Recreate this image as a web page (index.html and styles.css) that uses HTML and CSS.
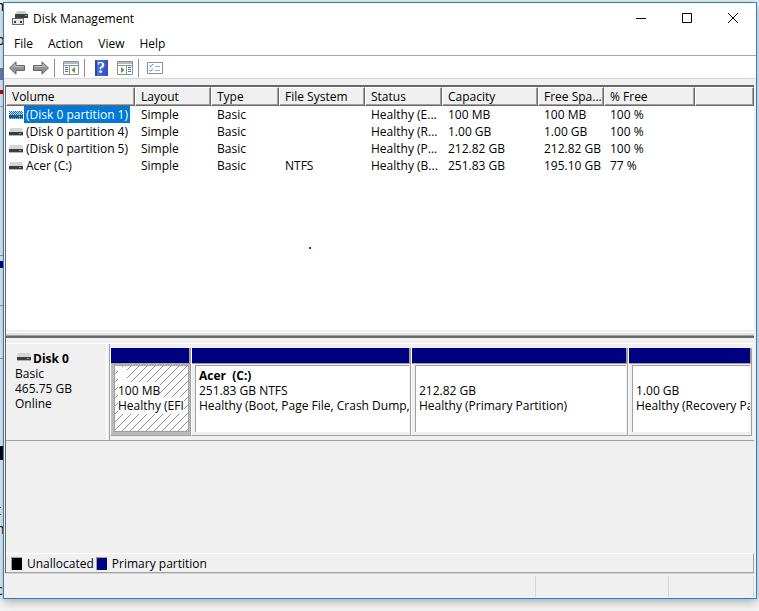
FILE: index.html
```html
<!DOCTYPE html>
<html lang="en">
<head>
    <meta charset="UTF-8">
    <meta name="viewport" content="width=device-width, initial-scale=1.0">
    <title>Disk Management</title>
    <link rel="stylesheet" href="styles.css">
</head>
<body>
    <!-- page showing behind the window -->
    <div class="backdrop" aria-hidden="true">
        <span class="scrap" style="top: -2px">m</span>
        <span class="scrap" style="top: 32px">b</span>
        <span class="scrap" style="top: 502px">t</span>
        <span class="scrap" style="top: 521px">n</span>
        <span class="scrap" style="top: 582px">c</span>
        <i class="mark slate" style="top: 68px; height: 12px"></i>
        <i class="mark red" style="top: 90px; height: 4px"></i>
        <i class="mark line" style="top: 106px; height: 1px"></i>
        <i class="mark line" style="top: 255px; height: 1px"></i>
        <i class="mark navy" style="top: 261px; height: 7px"></i>
        <i class="mark line" style="top: 305px; height: 1px"></i>
        <i class="mark line" style="top: 358px; height: 1px"></i>
        <i class="mark black" style="top: 446px; height: 14px"></i>
    </div>

    <svg class="defs" aria-hidden="true">
        <symbol id="drive" viewBox="0 0 14 8">
            <path d="M1 0h12l1 4H0z" fill="#d4d5d8"/>
            <rect y="4" width="14" height="3" fill="#3a3d42"/>
            <rect y="7" width="14" height="1" fill="#b4b4b4"/>
            <rect x="10" y="5" width="2" height="1" fill="#35e04a"/>
        </symbol>
        <pattern id="dither" width="2" height="2" patternUnits="userSpaceOnUse">
            <path d="M0 0h1v1H0zM1 1h1v1H1z" fill="#0078d7"/>
        </pattern>
    </svg>

    <div class="window">
        <header class="titlebar">
            <svg class="app-icon" viewBox="0 0 16 16" aria-hidden="true">
                <path d="M5 1h8l3 3H3z" fill="#c9cbcd"/>
                <path d="M3 4h13v4H3z" fill="#3b3e41"/>
                <rect x="13" y="5" width="2" height="1" fill="#3ee04c"/>
                <path d="M0 8h12v7H0z" fill="#6a6a6a"/>
                <path d="M1 9h10v5H1z" fill="#e8e8e8"/>
                <path d="M2 11h2v2H2zM8 11h2v2H8z" fill="#333"/>
            </svg>
            <h1>Disk Management</h1>
            <div class="controls">
                <button type="button" aria-label="Minimize">
                    <svg viewBox="0 0 10 10"><path d="M0 5.5h10"/></svg>
                </button>
                <button type="button" aria-label="Maximize">
                    <svg viewBox="0 0 10 10"><path d="M.5.5h9v9h-9z"/></svg>
                </button>
                <button type="button" aria-label="Close">
                    <svg viewBox="0 0 10 10"><path d="M0 0l10 10M10 0L0 10"/></svg>
                </button>
            </div>
        </header>

        <nav class="menubar">
            <button type="button">File</button>
            <button type="button">Action</button>
            <button type="button">View</button>
            <button type="button">Help</button>
        </nav>

        <div class="toolbar">
            <button type="button" aria-label="Back">
                <svg viewBox="0 0 16 14"><path d="M.5 7L7 .8v3.700h8.500v5H7v3.700z" fill="#929292" stroke="#666"/><path d="M2.500 6.800L6 3.500v2h8.500" fill="none" stroke="#c4c4c4"/></svg>
            </button>
            <button type="button" aria-label="Forward">
                <svg viewBox="0 0 16 14"><path d="M15.500 7L9 .8v3.700H.5v5H9v3.700z" fill="#929292" stroke="#666"/><path d="M1.500 5.500H10v-2l3.500 3.300" fill="none" stroke="#c4c4c4"/></svg>
            </button>
            <span class="divider"></span>
            <button type="button" aria-label="Show or hide console tree">
                <svg viewBox="0 0 16 14"><path d="M.5.5h15v13H.5z" fill="#fff" stroke="#8b919b"/><path d="M1 1h14v2H1z" fill="#b4bac4"/><path d="M1 4.500h14M6.500 5v8" stroke="#8b919b"/><path d="M2 6.500h3M2 8.500h3M2 10.500h3" stroke="#3c76b5"/><path d="M12 6v6L8.500 9z" fill="#3fae2a"/></svg>
            </button>
            <span class="divider"></span>
            <button type="button" aria-label="Help">
                <span class="help">?</span>
            </button>
            <button type="button" aria-label="Show or hide action pane">
                <svg viewBox="0 0 16 14"><path d="M.5.5h15v13H.5z" fill="#fff" stroke="#8b919b"/><path d="M1 1h14v2H1z" fill="#b4bac4"/><path d="M1 4.500h14M9.500 5v8" stroke="#8b919b"/><path d="M11 6.500h3M11 8.500h3M11 10.500h3" stroke="#3c76b5"/><path d="M4 6v6l3.500-3z" fill="#3fae2a"/></svg>
            </button>
            <span class="divider"></span>
            <button type="button" aria-label="Properties">
                <svg viewBox="0 0 16 12"><path d="M.5.5h15v11H.5z" fill="#fff" stroke="#8b919b"/><path d="M2.500 3.500l1.200 1.200L6 2M2.500 8l1.200 1.200L6 6.500" fill="none" stroke="#2f8be0"/><path d="M8 4.500h5M8 8.500h5" stroke="#a9adb4"/></svg>
            </button>
        </div>

        <main class="panes">
            <div class="volumes">
                <table>
                    <colgroup>
                        <col class="c-volume"><col class="c-layout"><col class="c-type"><col class="c-fs"><col class="c-status"><col class="c-capacity"><col class="c-space"><col class="c-free"><col>
                    </colgroup>
                    <thead>
                        <tr><th>Volume</th><th>Layout</th><th>Type</th><th>File System</th><th>Status</th><th>Capacity</th><th>Free Spa...</th><th>% Free</th><th></th></tr>
                    </thead>
                    <tbody>
                        <tr class="selected"><td><svg class="drive"><use href="#drive"/><rect width="14" height="8" fill="url(#dither)"/></svg><span>(Disk 0 partition 1)</span></td><td>Simple</td><td>Basic</td><td></td><td>Healthy (E...</td><td>100 MB</td><td>100 MB</td><td>100 %</td><td></td></tr>
                        <tr><td><svg class="drive"><use href="#drive"/></svg><span>(Disk 0 partition 4)</span></td><td>Simple</td><td>Basic</td><td></td><td>Healthy (R...</td><td>1.00 GB</td><td>1.00 GB</td><td>100 %</td><td></td></tr>
                        <tr><td><svg class="drive"><use href="#drive"/></svg><span>(Disk 0 partition 5)</span></td><td>Simple</td><td>Basic</td><td></td><td>Healthy (P...</td><td>212.82 GB</td><td>212.82 GB</td><td>100 %</td><td></td></tr>
                        <tr><td><svg class="drive"><use href="#drive"/></svg><span>Acer (C:)</span></td><td>Simple</td><td>Basic</td><td>NTFS</td><td>Healthy (B...</td><td>251.83 GB</td><td>195.10 GB</td><td>77 %</td><td></td></tr>
                    </tbody>
                </table>
                <i class="speck"></i>
            </div>
            <div class="splitter"></div>

            <section class="disk">
                <div class="disk-info">
                    <h2><svg class="drive"><use href="#drive"/></svg>Disk 0</h2>
                    <p>Basic</p>
                    <p>465.75 GB</p>
                    <p>Online</p>
                </div>
                <div class="partitions">
                    <div class="partition active">
                        <div class="body"><p><span>&nbsp;&nbsp;&nbsp;</span></p><p><span>100 MB</span></p><p><span>Healthy (EFI</span></p></div>
                    </div>
                    <div class="partition">
                        <div class="body"><p class="name">Acer&nbsp; (C:)</p><p>251.83 GB NTFS</p><p>Healthy (Boot, Page File, Crash Dump,</p></div>
                    </div>
                    <div class="partition">
                        <div class="body"><p>&nbsp;</p><p>212.82 GB</p><p>Healthy (Primary Partition)</p></div>
                    </div>
                    <div class="partition">
                        <div class="body"><p>&nbsp;</p><p>1.00 GB</p><p>Healthy (Recovery Pa</p></div>
                    </div>
                </div>
            </section>

            <div class="legend">
                <span class="swatch unallocated"></span>Unallocated
                <span class="swatch primary"></span>Primary partition
            </div>
        </main>

        <footer class="statusbar"><span></span><span></span><span></span></footer>
    </div>
</body>
</html>
```

FILE: styles.css
```css
:root {
    --face: #f0f0f0;
    --shadow: #a0a0a0;
    --dark: #696969;
    --accent: #1883d7;
    --navy: #000080;
}

* {
    margin: 0;
    padding: 0;
    box-sizing: border-box;
}

body {
    height: 100vh;
    padding: 2px 2px 12px 3px;
    font-family: "Open Sans", "Noto Sans", sans-serif;
    font-size: 12px;
    line-height: 15px;
    color: #000;
    background: #f4f4f4;
    overflow: hidden;
}

button {
    font: inherit;
    color: inherit;
    background: none;
    border: none;
}

.defs {
    position: absolute;
    width: 0;
    height: 0;
}

.backdrop {
    position: absolute;
    inset: 0;
    background: #f4f4f4;
    overflow: hidden;
}

.scrap {
    position: absolute;
    left: -4px;
    font-size: 14px;
    line-height: 16px;
}

.mark {
    position: absolute;
    left: 0;
    width: 3px;
}

.slate { background: #8080a0; }
.red { background: #e00000; }
.line { background: #a0a0a0; }
.navy { background: var(--navy); }
.black { background: #000; }

.window {
    position: relative;
    display: flex;
    flex-direction: column;
    height: 100%;
    background: var(--face);
    border: 1px solid var(--accent);
    box-shadow: 0 2px 10px rgba(0, 0, 0, 0.35);
}

.titlebar {
    display: flex;
    align-items: center;
    height: 30px;
    padding-left: 8px;
    background: #fff;
}

.app-icon {
    width: 16px;
    height: 16px;
}

h1 {
    margin-left: 5px;
    font-size: 12px;
    font-weight: 400;
}

.controls {
    display: flex;
    margin-left: auto;
}

.controls button {
    display: grid;
    place-items: center;
    width: 46px;
    height: 29px;
}

.controls svg {
    width: 10px;
    height: 10px;
    fill: none;
    stroke: #000;
}

.menubar {
    display: flex;
    height: 23px;
    padding: 0 0 2px 2px;
    background: #fff;
    border-bottom: 1px solid #a8a8a8;
}

.menubar button {
    padding: 0 7px 0 8px;
}

.toolbar {
    display: flex;
    align-items: center;
    height: 23px;
    padding: 2px 0 0 1px;
    background: #fff;
    border-bottom: 1px solid #d8d8d8;
}

.toolbar button {
    display: grid;
    place-items: center;
    width: 24px;
    height: 18px;
}

.toolbar svg {
    width: 16px;
}

.help {
    width: 13px;
    height: 16px;
    font-family: "Liberation Serif", serif;
    font-size: 16px;
    font-weight: 700;
    line-height: 16px;
    color: #fff;
    background: linear-gradient(90deg, #2c48a8 0 2px, #4a70dc 2px, #2f50c0);
}

.divider {
    width: 1px;
    height: 18px;
    margin: 0 4px 0 1px;
    background: #8d8d8d;
}

.panes {
    flex: 1;
    display: flex;
    flex-direction: column;
    min-height: 0;
    margin: 6px 2px 0 1px;
    border: 1px solid var(--dark);
    border-width: 2px 0 0 1px;
}

.volumes {
    position: relative;
    height: 243px;
    background: #fff;
}

table {
    width: 100%;
    table-layout: fixed;
    border-collapse: separate;
    border-spacing: 0;
}

.c-volume { width: 129px; }
.c-layout { width: 76px; }
.c-type { width: 68px; }
.c-fs { width: 86px; }
.c-status { width: 77px; }
.c-capacity { width: 96px; }
.c-space { width: 66px; }
.c-free { width: 91px; }

th {
    height: 19px;
    padding-left: 5px;
    font-weight: 400;
    text-align: left;
    white-space: nowrap;
    background: var(--face);
    border: 1px solid #fff;
    border-right-color: var(--dark);
    border-bottom-color: var(--dark);
    box-shadow: inset -1px -1px var(--shadow);
}

td {
    height: 17px;
    padding-left: 6px;
    white-space: nowrap;
}

td:first-child {
    display: flex;
    align-items: center;
    padding-left: 3px;
}

td:first-child span {
    height: 17px;
    padding: 0 2px;
    margin-left: 1px;
    line-height: 17px;
}

.drive {
    width: 14px;
    height: 8px;
}

.selected span {
    color: #fff;
    background: #0078d7;
}

.speck {
    position: absolute;
    left: 303px;
    top: 160px;
    width: 2px;
    height: 2px;
    background: #3030b0;
}

.splitter {
    height: 8px;
    background: #e3e3e3;
    border-top: 2px solid var(--face);
    border-bottom: 2px solid var(--dark);
    box-shadow: inset 0 1px #fff, inset 0 -1px var(--shadow);
}

.disk {
    display: flex;
    height: 98px;
    margin-top: 5px;
    border-top: 1px solid #fff;
    border-bottom: 1px solid var(--shadow);
}

.disk-info {
    width: 104px;
    padding: 7px 0 0 9px;
    border-right: 1px solid var(--shadow);
    box-shadow: inset -2px 0 var(--face), inset -3px 0 #fff;
}

h2 {
    font-size: 12px;
    line-height: 15px;
}

.disk-info .drive {
    margin: 0 2px 2px;
}

.partitions {
    flex: 1;
    display: grid;
    grid-template-columns: minmax(0, 81fr) minmax(0, 220fr) minmax(0, 217fr) minmax(0, 124fr);
    padding: 4px 2px 4px 0;
}

.partition {
    display: flex;
    flex-direction: column;
    padding: 0 1px 3px 3px;
    border: 1px solid var(--shadow);
    border-top: none;
    border-left-color: #fff;
}

.partition::before {
    content: "";
    height: 15px;
    margin: 0 -1px 1px -3px;
    background: var(--navy);
    border-bottom: 1px solid var(--shadow);
    border-right: 1px solid var(--shadow);
}

.body {
    flex: 1;
    padding: 2px 0 0 3px;
    background: #fff;
    border: 1px solid var(--shadow);
    border-right: none;
    border-bottom: none;
    overflow: hidden;
}

.body p {
    white-space: nowrap;
}

.name {
    font-weight: 700;
}

.active {
    background: #bababa;
}

.active .body {
    background: #fff linear-gradient(135deg, transparent 46%, #909090 46% 54%, transparent 54%) 0 0 / 8px 8px;
    border: 1px solid var(--shadow);
}

.active .body span {
    background: #fff;
}

.legend {
    display: flex;
    align-items: center;
    height: 20px;
    margin-top: auto;
    padding-left: 5px;
    border-top: 1px solid #fff;
    border-bottom: 1px solid var(--shadow);
    border-right: 1px solid var(--shadow);
}

.swatch {
    width: 11px;
    height: 13px;
    margin-right: 5px;
    border: 1px solid var(--shadow);
    border-width: 1px 0 0 1px;
}

.unallocated { background: #000; }

.primary {
    margin-left: 2px;
    background: var(--navy);
}

.statusbar {
    display: flex;
    height: 25px;
    padding: 2px 2px 1px 0;
    border-top: 1px solid #d7d7d7;
}

.statusbar span {
    width: 133px;
    border-right: 1px solid #d7d7d7;
}

.statusbar span:first-child {
    flex: 1;
}

.statusbar span:last-child {
    width: 85px;
}
```
